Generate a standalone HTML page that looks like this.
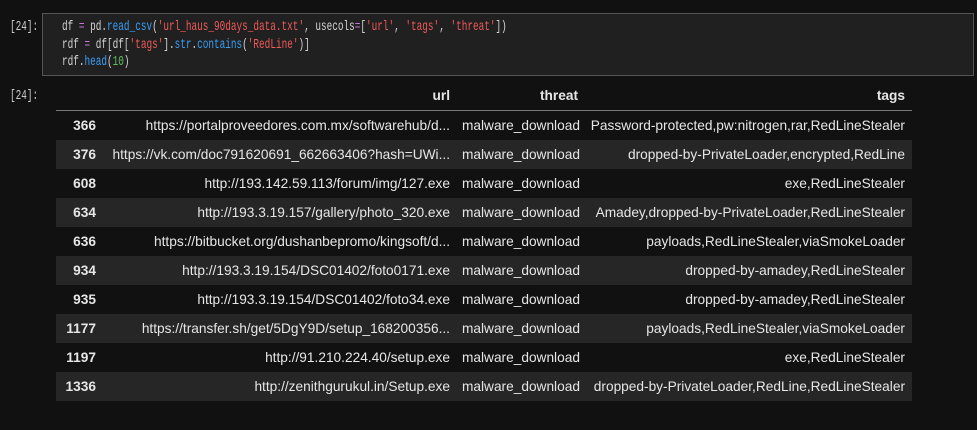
<!DOCTYPE html>
<html><head><meta charset="utf-8"><style>
body{margin:0;width:977px;height:430px;background:#111;overflow:hidden;font-family:"Liberation Sans",sans-serif;color:#e6e6e6;position:relative}
.p{position:absolute;font-family:"Liberation Mono",monospace;font-size:14px;color:#ccc;white-space:pre;transform:scaleX(0.67);transform-origin:left}
.box{position:absolute;left:42px;top:13px;width:930px;height:61px;background:#202020;border:1px solid #555}
.code{position:absolute;left:62px;font-family:"Liberation Mono",monospace;font-size:14px;color:#d4d4d4;white-space:pre;transform:scaleX(0.67);transform-origin:left;line-height:17.5px}
.f{color:#3a9ef5}.s{color:#f05a5a}.o{color:#c678dd}.n{color:#5fbf5f}
.row{position:absolute;left:56px;width:856px;height:29px;font-size:13.7px;line-height:29px}
.row div{position:absolute;top:0;white-space:nowrap}
.i{left:0;width:40px;text-align:right;font-weight:bold}
.u{right:462px;text-align:right}
.t{left:406px}
.g{right:7px;text-align:right}
.alt{background:#262626}
</style></head><body>
<div class="p" style="left:10px;top:19px">[24]:</div>
<div class="box"></div>
<div class="code" style="top:19px">df <span class="o">=</span> pd.<span class="f">read_csv</span>(<span class="s">'url_haus_90days_data.txt'</span>, usecols<span class="o">=</span>[<span class="s">'url'</span>, <span class="s">'tags'</span>, <span class="s">'threat'</span>])
rdf <span class="o">=</span> df[df[<span class="s">'tags'</span>].<span class="f">str</span>.<span class="f">contains</span>(<span class="s">'RedLine'</span>)]
rdf.<span class="f">head</span>(<span class="n">10</span>)</div>
<div class="p" style="left:10px;top:88px">[24]:</div>
<div class="row" style="top:82px;font-weight:bold;border-bottom:1px solid #777;height:28px;line-height:28px">
<div class="u">url</div><div class="t" style="left:auto;right:334px">threat</div><div class="g">tags</div></div>
<div class="row" style="top:111px"><div class="i">366</div><div class="u">https://portalproveedores.com.mx/softwarehub/d...</div><div class="t">malware_download</div><div class="g">Password-protected,pw:nitrogen,rar,RedLineStealer</div></div>
<div class="row alt" style="top:140px"><div class="i">376</div><div class="u">https://vk.com/doc791620691_662663406?hash=UWi...</div><div class="t">malware_download</div><div class="g">dropped-by-PrivateLoader,encrypted,RedLine</div></div>
<div class="row" style="top:169px"><div class="i">608</div><div class="u">http://193.142.59.113/forum/img/127.exe</div><div class="t">malware_download</div><div class="g">exe,RedLineStealer</div></div>
<div class="row alt" style="top:198px"><div class="i">634</div><div class="u">http://193.3.19.157/gallery/photo_320.exe</div><div class="t">malware_download</div><div class="g">Amadey,dropped-by-PrivateLoader,RedLineStealer</div></div>
<div class="row" style="top:227px"><div class="i">636</div><div class="u">https://bitbucket.org/dushanbepromo/kingsoft/d...</div><div class="t">malware_download</div><div class="g">payloads,RedLineStealer,viaSmokeLoader</div></div>
<div class="row alt" style="top:256px"><div class="i">934</div><div class="u">http://193.3.19.154/DSC01402/foto0171.exe</div><div class="t">malware_download</div><div class="g">dropped-by-amadey,RedLineStealer</div></div>
<div class="row" style="top:285px"><div class="i">935</div><div class="u">http://193.3.19.154/DSC01402/foto34.exe</div><div class="t">malware_download</div><div class="g">dropped-by-amadey,RedLineStealer</div></div>
<div class="row alt" style="top:314px"><div class="i">1177</div><div class="u">https://transfer.sh/get/5DgY9D/setup_168200356...</div><div class="t">malware_download</div><div class="g">payloads,RedLineStealer,viaSmokeLoader</div></div>
<div class="row" style="top:343px"><div class="i">1197</div><div class="u">http://91.210.224.40/setup.exe</div><div class="t">malware_download</div><div class="g">exe,RedLineStealer</div></div>
<div class="row alt" style="top:372px"><div class="i">1336</div><div class="u">http://zenithgurukul.in/Setup.exe</div><div class="t">malware_download</div><div class="g">dropped-by-PrivateLoader,RedLine,RedLineStealer</div></div>
</body></html>
